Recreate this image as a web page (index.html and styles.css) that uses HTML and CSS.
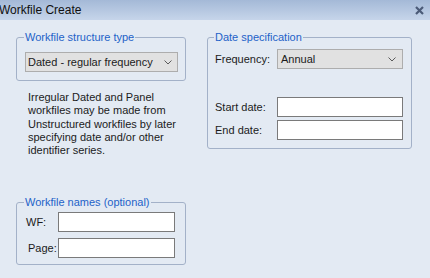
FILE: index.html
```html
<!DOCTYPE html>
<html lang="en">
<head>
  <meta charset="UTF-8">
  <title>Workfile Create</title>
  <link rel="stylesheet" href="styles.css">
</head>
<body>
  <div class="titlebar">
    <span class="title">Workfile Create</span>
    <svg class="close" width="9" height="9" viewBox="0 0 9 9">
      <path d="M1 1 L8 8 M8 1 L1 8" stroke="#4b5b78" stroke-width="2.2" fill="none"/>
    </svg>
  </div>

  <div class="dialog">
    <!-- Left column -->
    <div class="col-left">
      <fieldset class="group group-type">
        <legend>Workfile structure type</legend>
        <div class="combo combo-type">
          <span>Dated - regular frequency</span>
          <svg class="chevron" width="8" height="5" viewBox="0 0 8 5"><path d="M0.5 0.5 L4 4 L7.5 0.5" stroke="#5a5a5a" fill="none"/></svg>
        </div>
      </fieldset>

      <p class="note">
        Irregular Dated and Panel<br>
        workfiles may be made from<br>
        Unstructured workfiles by later<br>
        specifying date and/or other<br>
        identifier series.
      </p>

      <fieldset class="group group-names">
        <legend>Workfile names (optional)</legend>
        <div class="row">
          <label class="lbl-wf">WF:</label>
          <input type="text" class="field field-name">
        </div>
        <div class="row row-page">
          <label class="lbl-page">Page:</label>
          <input type="text" class="field field-name">
        </div>
      </fieldset>
    </div>

    <!-- Right column -->
    <div class="col-right">
      <fieldset class="group group-date">
        <legend>Date specification</legend>
        <div class="row">
          <label class="lbl-date">Frequency:</label>
          <div class="combo combo-freq">
            <span>Annual</span>
            <svg class="chevron" width="8" height="5" viewBox="0 0 8 5"><path d="M0.5 0.5 L4 4 L7.5 0.5" stroke="#5a5a5a" fill="none"/></svg>
          </div>
        </div>
        <div class="row row-start">
          <label class="lbl-date">Start date:</label>
          <input type="text" class="field field-date">
        </div>
        <div class="row row-end">
          <label class="lbl-date">End date:</label>
          <input type="text" class="field field-date">
        </div>
      </fieldset>
    </div>
  </div>
</body>
</html>
```

FILE: styles.css
```css
body {
  margin: 0;
  width: 430px;
  height: 278px;
  overflow: hidden;
  background-color: #e3eaf3;
  font-family: "Liberation Sans", Arial, sans-serif;
  font-size: 11px;
  color: #1b1b1b;
}

/* Window title */
.titlebar {
  height: 20px;
  display: flex;
  align-items: center;
  justify-content: space-between;
  background: linear-gradient(#a4b9d7, #c6d5ea);
}

.title {
  font-size: 12px;
  color: #101010;
  margin-left: -1px;
}

.close {
  margin-right: 6px;
}

.dialog {
  display: flex;
  padding-left: 16px;
  gap: 21px;
}

.col-left {
  width: 170px;
}

.col-right {
  width: 205px;
}

/* Group boxes */
.group {
  margin: 10px 0 0;
  border: 1px solid #a3b1c8;
  border-radius: 3px;
  min-width: 0;
}

.group legend {
  color: #1e62c8;
  line-height: 14px;
  padding: 0 1px;
  margin-left: -1px;
}

.group-type {
  padding: 8px 7px 8px 8px;
}

.group-names {
  margin-top: 38px;
  padding: 3px 9px 6px 8px;
}

.group-date {
  padding: 5px 8px 8px 7px;
}

/* Combo boxes */
.combo {
  box-sizing: border-box;
  height: 20px;
  display: flex;
  align-items: center;
  justify-content: space-between;
  background-color: #e1e1e1;
  border: 1px solid #adadad;
}

.combo-type {
  width: 153px;
  padding: 0 5px 0 2px;
}

.combo-freq {
  width: 126px;
  padding: 0 6px 0 3px;
}

.chevron {
  margin-top: 1px;
}

.note {
  margin: 10px 0 0 12px;
  line-height: 13.3px;
}

/* Rows with a label and an input */
.row {
  display: flex;
  align-items: center;
}

.row-page {
  margin-top: 6px;
}

.row-start {
  margin-top: 28px;
}

.row-end {
  margin-top: 3px;
}

.lbl-wf,
.lbl-page {
  width: 33px;
  box-sizing: border-box;
  padding-left: 1px;
}

.lbl-page {
  padding-left: 3px;
}

.lbl-date {
  width: 62px;
}

.field {
  box-sizing: border-box;
  height: 20px;
  margin: 0;
  border: 1px solid #7a7a7a;
  background: #fff;
  font: inherit;
}

.field-name {
  width: 117px;
}

.field-date {
  width: 126px;
}
```
